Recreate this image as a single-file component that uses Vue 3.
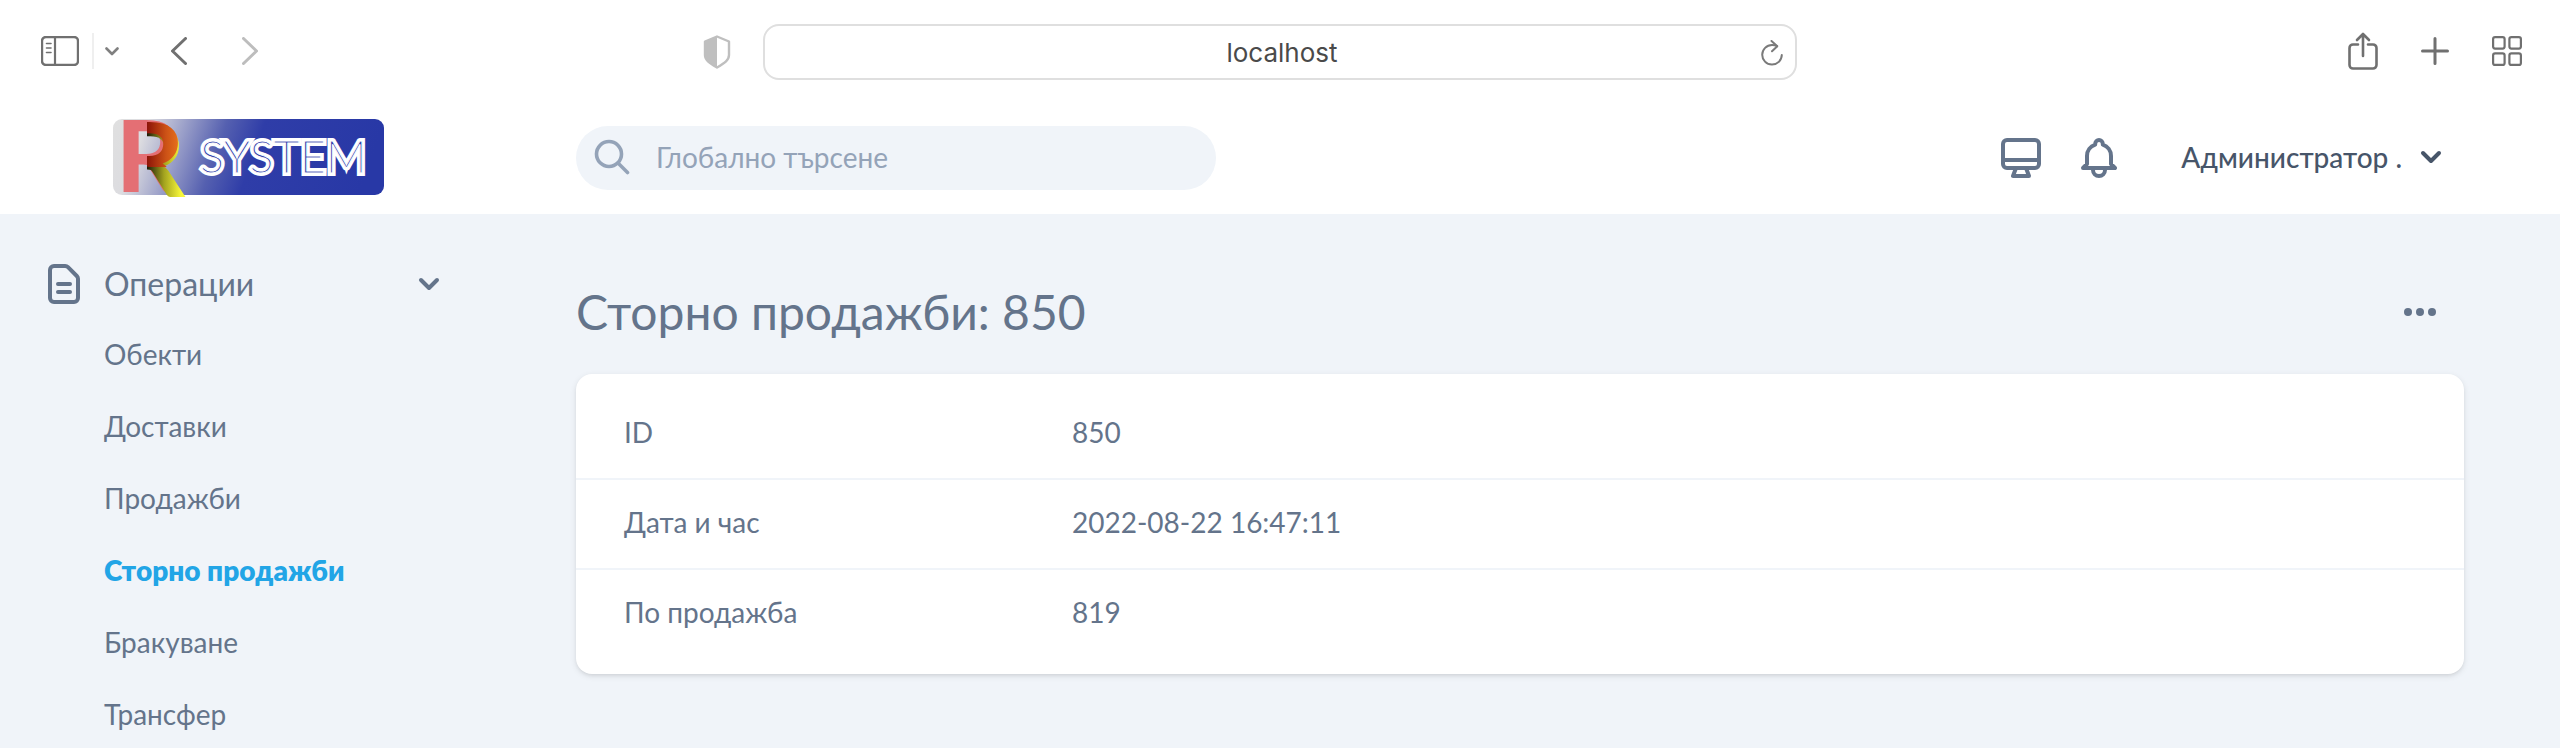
<template>
  <div class="window">
    <div class="toolbar">
      <div class="toolbar-left">
        <button class="icon-btn" aria-label="Sidebar">
          <svg width="38" height="30" viewBox="0 0 38 30" fill="none" stroke="#707070">
            <rect x="1" y="1" width="36" height="28" rx="4" stroke-width="2.4" />
            <path d="M14 1v28" stroke-width="2.2" />
            <path d="M5.500 7.500h4.500M5.500 12h4.500M5.500 16.500h4.500" stroke-width="1.600" stroke-linecap="round" />
          </svg>
        </button>
        <span class="divider"></span>
        <button class="icon-btn menu-btn" aria-label="Tab groups">
          <svg width="14" height="9" viewBox="0 0 14 9" fill="none" stroke="#808080" stroke-width="2.600" stroke-linecap="round" stroke-linejoin="round">
            <path d="M1.500 1.500 7 7l5.500-5.500" />
          </svg>
        </button>
        <button class="icon-btn back-btn" aria-label="Back">
          <svg width="16" height="28" viewBox="0 0 16 28" fill="none" stroke="#707070" stroke-width="3" stroke-linecap="round" stroke-linejoin="round">
            <path d="M14.500 1.500 1.500 14l13 12.500" />
          </svg>
        </button>
        <button class="icon-btn forward-btn" aria-label="Forward">
          <svg width="16" height="28" viewBox="0 0 16 28" fill="none" stroke="#bdbdbd" stroke-width="3" stroke-linecap="round" stroke-linejoin="round">
            <path d="m1.500 1.500 13 12.500-13 12.500" />
          </svg>
        </button>
      </div>

      <div class="address">
        <button class="icon-btn" aria-label="Privacy report">
          <svg width="28" height="34" viewBox="0 0 28 34">
            <path d="M14 1.500 26 6.500V20c0 5-4 8-12 12.500C6 28 2 25 2 20V6.500z" fill="none" stroke="#bfbfbf" stroke-width="2.400" stroke-linejoin="round" />
            <path d="M14 1.500 2 6.500V20c0 5 4 8 12 12.500z" fill="#bfbfbf" />
          </svg>
        </button>
        <div class="url-box">
          <input v-model="url" class="url" type="text" aria-label="Address" />
          <button class="icon-btn" aria-label="Reload">
            <svg width="22" height="26" viewBox="0 0 22 26" fill="none" stroke="#7a7a7a" stroke-width="2" stroke-linecap="round" stroke-linejoin="round">
              <path d="M16 6.200C14.500 5.300 13 5 11 5A9.800 9.800 0 1 0 20.800 15" />
              <path d="m10.500 1 5.800 5.200-5.300 5" />
            </svg>
          </button>
        </div>
      </div>

      <div class="toolbar-right">
        <button class="icon-btn" aria-label="Share">
          <svg width="30" height="38" viewBox="0 0 30 38" fill="none" stroke="#707070" stroke-width="2.600" stroke-linecap="round" stroke-linejoin="round">
            <path d="M10 12.500H5A3.500 3.500 0 0 0 1.500 16v17A3.500 3.500 0 0 0 5 36.500h20a3.500 3.500 0 0 0 3.500-3.500V16a3.500 3.500 0 0 0-3.500-3.500h-5" />
            <path d="M15 24V2M9 8l6-6 6 6" />
          </svg>
        </button>
        <button class="icon-btn" aria-label="New tab">
          <svg width="28" height="28" viewBox="0 0 28 28" stroke="#707070" stroke-width="3" stroke-linecap="round">
            <path d="M14 1.500v25M1.500 14h25" />
          </svg>
        </button>
        <button class="icon-btn" aria-label="Tab overview">
          <svg width="30" height="30" viewBox="0 0 30 30" fill="none" stroke="#707070" stroke-width="2.200">
            <rect x="1.100" y="1.100" width="11.500" height="11.500" rx="2" />
            <rect x="17.400" y="1.100" width="11.500" height="11.500" rx="2" />
            <rect x="1.100" y="17.400" width="11.500" height="11.500" rx="2" />
            <rect x="17.400" y="17.400" width="11.500" height="11.500" rx="2" />
          </svg>
        </button>
      </div>
    </div>

    <header class="header">
      <a class="logo" href="#" aria-label="R System">
        <svg width="272" height="80" viewBox="0 0 272 80">
          <defs>
            <linearGradient id="plate" x1="0" x2="1" y1="0" y2="0.100">
              <stop offset="0" stop-color="#e0e0e0" />
              <stop offset="0.130" stop-color="#dcdce0" />
              <stop offset="0.300" stop-color="#8d93c4" />
              <stop offset="0.420" stop-color="#5560b0" />
              <stop offset="0.560" stop-color="#2f3da8" />
              <stop offset="1" stop-color="#2838a6" />
            </linearGradient>
            <linearGradient id="bowl" gradientUnits="userSpaceOnUse" x1="34" x2="72" y1="0" y2="0">
              <stop offset="0" stop-color="#8c1408" />
              <stop offset="0.500" stop-color="#cc5216" />
              <stop offset="1" stop-color="#f5801f" />
            </linearGradient>
            <linearGradient id="leg" gradientUnits="userSpaceOnUse" x1="34" x2="68" y1="0" y2="0">
              <stop offset="0" stop-color="#1c1c08" />
              <stop offset="0.500" stop-color="#a3a31f" />
              <stop offset="1" stop-color="#f8f83a" />
            </linearGradient>
            <clipPath id="right"><rect x="34" y="0" width="50" height="80" /></clipPath>
            <clipPath id="upper"><path d="M34 0h50v46q-12 6-22 3l-28 0z" /></clipPath>
          </defs>
          <rect x="0" y="1" width="271" height="76" rx="9" fill="url(#plate)" />
          <text class="letter" x="3" y="74" fill="#e46f74">R</text>
          <text class="letter" x="7" y="79" fill="url(#leg)" clip-path="url(#right)">R</text>
          <text class="letter" x="6" y="76" fill="url(#bowl)" clip-path="url(#upper)">R</text>
          <text class="word word-outline" x="87" y="55">SYSTEM</text>
          <text class="word" x="87" y="55">SYSTEM</text>
        </svg>
      </a>

      <label class="search">
        <svg width="36" height="36" viewBox="0 0 36 36" fill="none" stroke="#94a3b8" stroke-width="3.600" stroke-linecap="round">
          <circle cx="15" cy="15" r="12.500" />
          <path d="m24 24 9.500 9.500" />
        </svg>
        <input v-model="query" type="search" placeholder="Глобално търсене" aria-label="Глобално търсене" />
      </label>

      <div class="header-actions">
        <button class="icon-btn" aria-label="Theme">
          <svg width="40" height="40" viewBox="0 0 40 40" fill="none" stroke="#64748b" stroke-width="4" stroke-linejoin="round">
            <rect x="2" y="2" width="36" height="28" rx="4" />
            <path d="M2 22h36M15 30l-3 8h16l-3-8" />
          </svg>
        </button>
        <button class="icon-btn" aria-label="Notifications">
          <svg width="36" height="40" viewBox="0 0 36 40" fill="none" stroke="#64748b" stroke-width="4" stroke-linejoin="round">
            <path d="M14.200 6.600V5.800a3.800 3.800 0 0 1 7.600 0v.8A12 12 0 0 1 30 18v8l4 4H2l4-4v-8a12 12 0 0 1 8.200-11.400z" />
            <path d="M12 30v2a6 6 0 0 0 12 0v-2" />
          </svg>
        </button>
        <button class="user">
          Администратор .
          <svg width="22" height="14" viewBox="0 0 22 14" fill="none" stroke="#475569" stroke-width="4" stroke-linecap="round" stroke-linejoin="round">
            <path d="m3 3 8 8 8-8" />
          </svg>
        </button>
      </div>
    </header>

    <div class="body">
      <nav class="sidebar">
        <button class="section" :aria-expanded="open" @click="open = !open">
          <svg width="32" height="40" viewBox="0 0 32 40" fill="none" stroke="#64748b" stroke-width="4" stroke-linecap="round" stroke-linejoin="round">
            <path d="M2 6a4 4 0 0 1 4-4h11.200a4 4 0 0 1 2.800 1.200L28.800 12a4 4 0 0 1 1.200 2.800V34a4 4 0 0 1-4 4H6a4 4 0 0 1-4-4z" />
            <path d="M10 20h12M10 28h12" />
          </svg>
          <span class="section-name">Операции</span>
          <svg width="22" height="14" viewBox="0 0 22 14" fill="none" stroke="#64748b" stroke-width="4" stroke-linecap="round" stroke-linejoin="round">
            <path d="m3 3 8 8 8-8" />
          </svg>
        </button>
        <ul v-if="open">
          <li v-for="item in items" :key="item">
            <a href="#" :class="{ active: item === current }" @click.prevent="current = item">{{ item }}</a>
          </li>
        </ul>
      </nav>

      <main class="content">
        <div class="heading">
          <h1>Сторно продажби: 850</h1>
          <button class="icon-btn" aria-label="Actions">
            <svg width="32" height="8" viewBox="0 0 32 8" fill="#64748b">
              <circle cx="4" cy="4" r="4" />
              <circle cx="16" cy="4" r="4" />
              <circle cx="28" cy="4" r="4" />
            </svg>
          </button>
        </div>
        <table class="card">
          <tbody>
            <tr v-for="field in fields" :key="field.name">
              <th scope="row">{{ field.name }}</th>
              <td>{{ field.value }}</td>
            </tr>
          </tbody>
        </table>
      </main>
    </div>
  </div>
</template>

<script setup>
import { ref } from 'vue';

const url = ref('localhost');
const query = ref('');
const open = ref(true);
const current = ref('Сторно продажби');

const items = ['Обекти', 'Доставки', 'Продажби', 'Сторно продажби', 'Бракуване', 'Трансфер'];

const fields = [
  { name: 'ID', value: '850' },
  { name: 'Дата и час', value: '2022-08-22 16:47:11' },
  { name: 'По продажба', value: '819' },
];
</script>

<style>
body {
  background: #f0f4f9;
}
</style>

<style scoped>
.window {
  font-family: Lato, 'Noto Sans', sans-serif;
  font-size: 28px;
  line-height: 40px;
  color: #64748b;
}

button, input {
  font: inherit;
  color: inherit;
  border: none;
  background: none;
  padding: 0;
  outline: none;
}

button {
  cursor: pointer;
}

svg {
  display: block;
  flex: none;
}

.icon-btn {
  display: flex;
}

.toolbar {
  display: grid;
  grid-template-columns: 1fr auto 1fr;
  align-items: center;
  height: 102px;
  padding: 0 38px 0 41px;
  background: #fff;
}

.toolbar-left, .toolbar-right, .address {
  display: flex;
  align-items: center;
}

.divider {
  width: 2px;
  height: 36px;
  margin-left: 13px;
  background: #efefef;
}

.menu-btn {
  margin-left: 11px;
}

.back-btn {
  margin-left: 52px;
}

.forward-btn {
  margin-left: 55px;
}

.address {
  gap: 32px;
  padding-top: 2px;
  margin-right: 63px;
}

.url-box {
  display: flex;
  align-items: center;
  width: calc(40vw + 10px);
  height: 56px;
  padding: 2px 12px 0 38px;
  box-sizing: border-box;
  border: 2px solid #dfdfdf;
  border-radius: 16px;
}

.url {
  flex: 1;
  min-width: 0;
  font-family: Inter, sans-serif;
  font-size: 26px;
  text-align: center;
  color: #4a4a4a;
}

.toolbar-right {
  justify-content: flex-end;
  gap: 43px;
}

.header {
  display: flex;
  align-items: center;
  height: 112px;
  padding-right: 118px;
  background: #fff;
}

.logo {
  width: 463px;
  flex: none;
  padding-left: 113px;
}

.logo svg {
  overflow: visible;
}

.letter {
  font-family: Lato, sans-serif;
  font-size: 100px;
  font-weight: 900;
  line-height: 80px;
}

.word {
  font-family: Lato, sans-serif;
  font-size: 45px;
  font-weight: 300;
  fill: #2f3da8;
  stroke: #fff;
  stroke-width: 1px;
}

.word-outline {
  fill: #fff;
  stroke-width: 6px;
}

.search {
  display: flex;
  align-items: center;
  gap: 26px;
  width: 25vw;
  min-width: 480px;
  height: 64px;
  padding: 0 18px 2px;
  box-sizing: border-box;
  border-radius: 32px;
  background: #f0f4f9;
}

.search input {
  flex: 1;
  min-width: 0;
}

.search input::placeholder {
  color: #94a3b8;
  opacity: 1;
}

.header-actions {
  display: flex;
  align-items: center;
  gap: 40px;
  margin-left: auto;
}

.user {
  display: flex;
  align-items: center;
  gap: 18px;
  padding-bottom: 2px;
  margin-left: 24px;
  font-weight: 500;
  color: #475569;
}

.body {
  display: flex;
}

.sidebar {
  width: 480px;
  flex: none;
  padding: 40px 40px 0 48px;
  box-sizing: border-box;
}

.section {
  display: flex;
  align-items: center;
  width: 100%;
  height: 60px;
}

.section-name {
  flex: 1;
  margin-left: 24px;
  text-align: left;
  font-size: 32px;
}

ul {
  display: flex;
  flex-direction: column;
  gap: 32px;
  list-style: none;
  margin: 20px 0 0;
  padding: 0 0 0 56px;
}

li a {
  display: block;
  color: inherit;
  text-decoration: none;
}

li a.active {
  font-weight: 800;
  color: #22a5e6;
}

.content {
  flex: 1;
  min-width: 0;
  padding: 62px 96px 0;
}

.heading {
  display: flex;
  align-items: center;
  justify-content: space-between;
  padding-right: 28px;
  margin-bottom: 26px;
}

h1 {
  margin: 0;
  font-size: 48px;
  font-weight: 400;
  line-height: 72px;
}

.card {
  width: 100%;
  padding: 16px 0;
  border-spacing: 0;
  border-radius: 16px;
  background: #fff;
  box-shadow: 0 2px 6px rgba(0, 0, 0, 0.1), 0 2px 4px -2px rgba(0, 0, 0, 0.1);
}

th, td {
  padding: 22px 48px 26px;
  border-bottom: 2px solid #f0f4f9;
  text-align: left;
  font-weight: 400;
}

th {
  width: 400px;
  padding-right: 0;
}

tr:last-child th, tr:last-child td {
  border-bottom: none;
}
</style>
